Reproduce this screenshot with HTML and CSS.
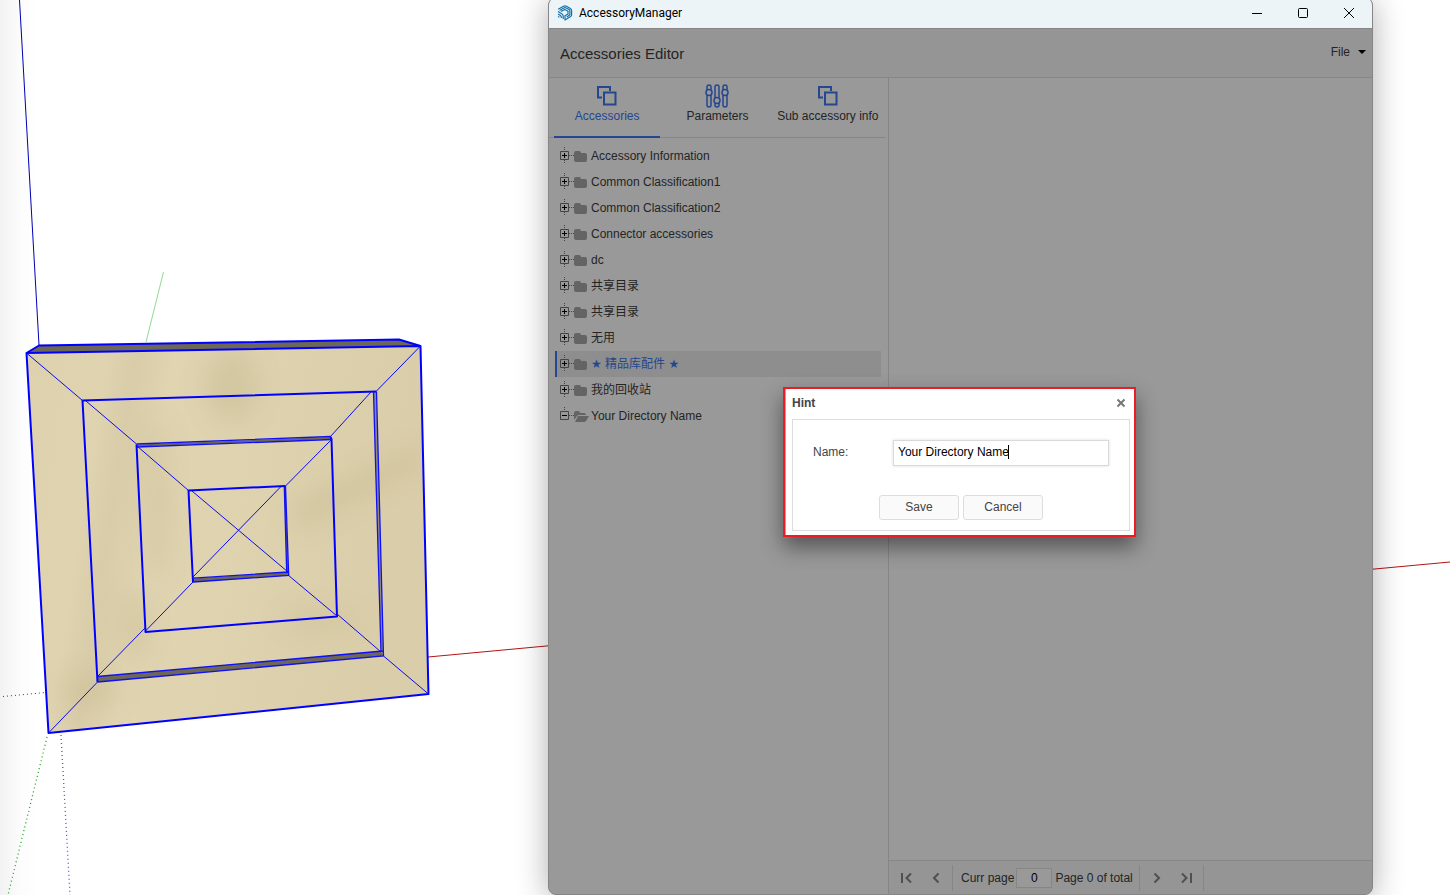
FILE: index.html
```html
<!DOCTYPE html>
<html lang="en">
<head>
<meta charset="utf-8">
<title>AccessoryManager</title>
<link rel="stylesheet" href="styles.css">
</head>
<body>
<svg class="scene" viewBox="0 0 1450 895" preserveAspectRatio="xMinYMin slice" aria-hidden="true">
  <defs>
    <linearGradient id="edge"><stop offset="0" stop-color="#f2f2f2"/><stop offset=".5" stop-color="#fcfcfc"/><stop offset="1" stop-color="#fff"/></linearGradient>
    <linearGradient id="wood" x1="0" x2="1" y1="0" y2=".15">
      <stop offset="0" stop-color="#ded2ae"/><stop offset=".2" stop-color="#dfd3b0"/><stop offset=".27" stop-color="#d9cca8"/>
      <stop offset=".36" stop-color="#e0d4b1"/><stop offset=".6" stop-color="#ded2af"/><stop offset="1" stop-color="#dacda9"/>
    </linearGradient>
    <filter id="soft" x="-50%" y="-50%" width="200%" height="200%"><feGaussianBlur stdDeviation="12"/></filter>
    <clipPath id="front"><path d="M26.5 353 420.5 346 428.5 694 48.5 733z"/></clipPath>
  </defs>
  <rect width="40" height="895" fill="url(#edge)"/>
  <g fill="none">
    <path d="M19.5 0 39 345" stroke="#0000b4"/>
    <path d="M163.500 272 146 342" stroke="#8edb8e"/>
    <path d="M428 657 1450 562" stroke="#b41414"/>
    <path d="M3 696.500 46 692.500" stroke="#a01414" stroke-dasharray="1 3"/>
    <path d="M47 737 8 895" stroke="#20a020" stroke-width="1.300" stroke-dasharray="1 3"/>
    <path d="M61 735 70 895" stroke="#5050d8" stroke-width="1.300" stroke-dasharray="1 3"/>
  </g>
  <path d="M26.5 353 420.5 346 428.5 694 48.500 733z" fill="url(#wood)"/>
  <g clip-path="url(#front)">
    <g filter="url(#soft)" fill="#c5b98f" opacity=".45">
      <ellipse cx="232" cy="385" rx="26" ry="36"/>
      <path d="M290 505 420 445 420 468 300 530z"/>
      <ellipse cx="157" cy="500" rx="9" ry="80"/>
      <ellipse cx="134" cy="625" rx="12" ry="36"/>
      <ellipse cx="320" cy="620" rx="40" ry="9"/>
      <ellipse cx="90" cy="690" rx="30" ry="14"/>
    </g>
  </g>
  <g fill="#6d6756">
    <path d="M26.500 353 39 345.500 399 339.500 420.500 346z"/>
    <path d="M97.500 676.500 381 651 383.500 656 97.500 682z"/>
    <path d="M373.500 392 376.500 391.500 383.500 656 381 652z" fill="#8e8a80"/>
    <path d="M136.500 444.500 330.500 437 331.500 439 137 446.500z"/>
    <path d="M193 578.500 288 572 288.500 575.500 193 582z"/>
    <path d="M284.500 487 285.500 486 288.500 575 286.500 572z"/>
  </g>
  <g fill="none" stroke="#0000ff" stroke-width="2" stroke-linejoin="round">
    <path d="M26.500 353 420.500 346 428.500 694 48.500 733zL39 345.500 399 339.500 420.500 346"/>
    <path d="M97.500 682 82.500 400.500 376.500 391.500"/>
    <path d="M136.500 444.500 145.500 632 337 616.500 331.500 439 330.500 437"/>
    <path d="M193 582 188.500 490.500 285.500 486"/>
  </g>
  <g fill="none" stroke="#1010f4" stroke-width="1.300">
    <path d="M376.500 391.500 383.500 656 97.500 682M373.500 392 381 652M97.500 676.500 383 651"/>
    <path d="M136.500 444 330.500 436.500M137 447 331.500 439.500"/>
    <path d="M285.500 486 288.700 575.500 193 582M193 578.200 288 572M284.300 487 286.700 572"/>
  </g>
  <g fill="none" stroke="#0a0af0">
    <path d="M26.500 353 82.500 400.500M86 401 136.500 444M137 446 188.500 490.500M192 491 288 572M288 575 337 616M337 614 381 652M383.500 656 428.500 694"/>
    <path d="M420.500 346 376.500 391M371 392 330 437M331 440 285.500 486M281 486.500 193 577M193 582 145.500 631M145 628 98 676M97.500 682 48.500 733"/>
  </g>
</svg>

<svg class="symbols" aria-hidden="true">
  <symbol id="i-squares" viewBox="0 0 22 22"><path d="M6 12.500H2V2h12v4M8 7.500h11.500v12H8z" fill="none" stroke="currentColor" stroke-width="2"/></symbol>
  <symbol id="i-sliders" viewBox="0 0 26 26"><g fill="none" stroke="currentColor" stroke-width="1.500"><path d="M3 7V4a2 2 0 0 1 4 0v3M3 12v10a2 2 0 0 0 4 0V12"/><circle cx="5" cy="9.500" r="3"/><path d="M11 15V4a2 2 0 0 1 4 0v11M11 20v2a2 2 0 0 0 4 0v-2"/><circle cx="13" cy="17.500" r="3"/><path d="M19 7V4a2 2 0 0 1 4 0v3M19 12v10a2 2 0 0 0 4 0V12"/><circle cx="21" cy="9.500" r="3"/></g></symbol>
  <symbol id="i-plus" viewBox="0 0 15 26"><path d="M5.500 4v4M5.500 17v4M10 12.500h5" stroke="#444" stroke-dasharray="1 1" fill="none"/><path d="M1.500 8.500h8v8h-8z" fill="none" stroke="#444"/><path d="M3 12.500h5M5.500 10v5" stroke="#000"/></symbol>
  <symbol id="i-minus" viewBox="0 0 15 26"><path d="M5.500 4v4M10 12.500h5" stroke="#444" stroke-dasharray="1 1" fill="none"/><path d="M1.500 8.500h8v8h-8z" fill="none" stroke="#444"/><path d="M3 12.500h5" stroke="#000"/></symbol>
  <symbol id="i-folder" viewBox="0 0 16 26"><path d="M0 10q0-2 2-2h3q2 0 2 2h4q2 0 2 2v5q0 2-2 2H2q-2 0-2-2z" fill="#646464"/></symbol>
  <symbol id="i-open" viewBox="0 0 16 26"><path d="M0 17v-7q0-2 2-2h2q2 0 2 2h4q2 0 2 2H5q-1 0-2 1z" fill="#646464"/><path d="M4 13h11l-3 5q-.6 1-2 1H1z" fill="#646464"/></symbol>
</svg>

<main class="window">
  <header class="titlebar">
    <svg class="logo" viewBox="0 0 16 16" aria-hidden="true"><g fill="none" stroke="#1272ab" stroke-width="1.200" stroke-linejoin="round"><path d="M1.200 4.200 6.500 1.200q1.500-.8 3 0L13.400 3.400q1.200.8 1.200 2.200v4.200q0 1.200-1 1.800L8 15v-4.200l3-1.800V6.200L7.800 4.400 4 6.600"/><path d="M2.600 5.400 6.800 3q1.200-.6 2.400 0l2.800 1.600q.9.500.9 1.600v3.600L9.800 12"/><path d="M1 6.600 5 8.900q1.200.8 1.200 2.200v3M1 9l2.400 1.400q.9.600.9 1.600v1M1 11.400l1.400.8"/></g></svg>
    <span class="app-name">AccessoryManager</span>
    <div class="window-buttons">
      <button type="button" aria-label="Minimize"><svg viewBox="0 0 12 12"><path d="M1 6.500h10" /></svg></button>
      <button type="button" aria-label="Maximize"><svg viewBox="0 0 12 12"><rect x="1.500" y="1.500" width="9" height="9" rx="1"/></svg></button>
      <button type="button" aria-label="Close window"><svg viewBox="0 0 12 12"><path d="M1 1l10 10M11 1 1 11"/></svg></button>
    </div>
  </header>
  <div class="app-header">
    <h1>Accessories Editor</h1>
    <button type="button" class="file-menu">File <svg viewBox="0 0 8 4" aria-hidden="true"><path d="M0 0h8L4 4z"/></svg></button>
  </div>
  <div class="content">
    <section class="sidebar">
      <nav class="tabs">
        <button type="button" class="tab active"><svg class="squares"><use href="#i-squares"/></svg>Accessories</button>
        <button type="button" class="tab"><svg><use href="#i-sliders"/></svg>Parameters</button>
        <button type="button" class="tab"><svg class="squares"><use href="#i-squares"/></svg>Sub accessory info</button>
      </nav>
      <ul class="tree">
        <li><svg class="toggle"><use href="#i-plus"/></svg><svg class="folder"><use href="#i-folder"/></svg>Accessory Information</li>
        <li><svg class="toggle"><use href="#i-plus"/></svg><svg class="folder"><use href="#i-folder"/></svg>Common Classification1</li>
        <li><svg class="toggle"><use href="#i-plus"/></svg><svg class="folder"><use href="#i-folder"/></svg>Common Classification2</li>
        <li><svg class="toggle"><use href="#i-plus"/></svg><svg class="folder"><use href="#i-folder"/></svg>Connector accessories</li>
        <li><svg class="toggle"><use href="#i-plus"/></svg><svg class="folder"><use href="#i-folder"/></svg>dc</li>
        <li lang="zh-CN"><svg class="toggle"><use href="#i-plus"/></svg><svg class="folder"><use href="#i-folder"/></svg>共享目录</li>
        <li lang="zh-CN"><svg class="toggle"><use href="#i-plus"/></svg><svg class="folder"><use href="#i-folder"/></svg>共享目录</li>
        <li lang="zh-CN"><svg class="toggle"><use href="#i-plus"/></svg><svg class="folder"><use href="#i-folder"/></svg>无用</li>
        <li lang="zh-CN" class="selected"><svg class="toggle"><use href="#i-plus"/></svg><svg class="folder"><use href="#i-folder"/></svg><span><span class="star">★</span> 精品库配件 <span class="star">★</span></span></li>
        <li lang="zh-CN"><svg class="toggle"><use href="#i-plus"/></svg><svg class="folder"><use href="#i-folder"/></svg>我的回收站</li>
        <li><svg class="toggle"><use href="#i-minus"/></svg><svg class="folder"><use href="#i-open"/></svg>Your Directory Name</li>
      </ul>
    </section>
    <section class="detail">
      <div class="pager">
        <div class="pager-group">
          <button type="button" aria-label="First page"><svg viewBox="0 0 12 12"><path d="M2 1v10M11 1.500 6.500 6l4.500 4.500"/></svg></button>
          <button type="button" aria-label="Previous page"><svg viewBox="0 0 12 12"><path d="M8.500 1.500 4 6l4.500 4.500"/></svg></button>
        </div>
        <div class="pager-group pager-text">
          <label for="page">Curr page</label>
          <input id="page" type="text" value="0">
          <span>Page 0 of total</span>
        </div>
        <div class="pager-group">
          <button type="button" aria-label="Next page"><svg viewBox="0 0 12 12"><path d="M3.500 1.500 8 6l-4.500 4.500"/></svg></button>
          <button type="button" aria-label="Last page"><svg viewBox="0 0 12 12"><path d="M10 1v10M1 1.500 5.500 6 1 10.500"/></svg></button>
        </div>
      </div>
    </section>
  </div>
</main>

<form class="dialog" role="dialog" aria-labelledby="hint-title">
  <div class="dialog-head">
    <h2 id="hint-title">Hint</h2>
    <button type="button" class="dialog-close" aria-label="Close"><svg viewBox="0 0 10 10"><path d="m1.500 1.500 7 7M8.500 1.500l-7 7"/></svg></button>
  </div>
  <div class="dialog-body">
    <div class="field">
      <label for="name">Name:</label>
      <div class="input-wrap">
        <input id="name" type="text" value="Your Directory Name">
        <span class="caret"></span>
      </div>
    </div>
    <div class="actions">
      <button type="button">Save</button>
      <button type="button">Cancel</button>
    </div>
  </div>
</form>
</body>
</html>
```

FILE: styles.css
```css
* {
  box-sizing: border-box;
}

body {
  position: relative;
  height: 100vh;
  margin: 0;
  overflow: hidden;
  background: #fff;
  color: #242424;
  font: 12px/16px "Liberation Sans", "Noto Sans CJK SC", sans-serif;
}

button,
input {
  margin: 0;
  padding: 0;
  border: 0;
  background: none;
  color: inherit;
  font: inherit;
}

h1,
h2,
ul {
  margin: 0;
  padding: 0;
  font-weight: normal;
}

svg {
  display: block;
}

.symbols {
  position: absolute;
  width: 0;
  height: 0;
}

.scene {
  width: 100%;
  height: 100%;
}

/* Application window floating over the drawing */
.window {
  position: absolute;
  top: -3px;
  right: 77px;
  bottom: 0;
  left: 548px;
  display: flex;
  flex-direction: column;
  overflow: hidden;
  border: 1px solid #868686;
  border-radius: 8px;
  background: #999;
  box-shadow: 0 4px 32px rgba(0, 0, 0, 0.32);
}

.titlebar {
  display: flex;
  flex: none;
  align-items: center;
  height: 31px;
  padding-left: 8px;
  border-bottom: 1px solid #868686;
  background: #ecf4f8;
  color: #000;
}

.logo {
  width: 16px;
  height: 16px;
}

.app-name {
  margin-left: 6px;
  font-family: Roboto, sans-serif;
}

.window-buttons {
  display: flex;
  margin-left: auto;
}

.window-buttons button {
  display: grid;
  width: 46px;
  height: 30px;
  place-items: center;
}

.window-buttons svg {
  width: 12px;
  height: 12px;
  fill: none;
  stroke: #000;
}

.app-header {
  display: flex;
  flex: none;
  align-items: center;
  justify-content: space-between;
  height: 49px;
  padding: 0 6px 0 11px;
  border-bottom: 1px solid #868686;
  background: #959595;
}

.app-header h1 {
  padding-top: 2px;
  font-size: 15px;
  line-height: 20px;
}

.file-menu {
  display: flex;
  align-items: center;
  gap: 8px;
  padding-bottom: 2px;
}

.file-menu svg {
  width: 8px;
  height: 4px;
}

.content {
  display: flex;
  flex: 1;
  min-height: 0;
}

.sidebar {
  flex: none;
  width: 340px;
  border-right: 1px solid #868686;
}

.tabs {
  display: grid;
  grid-template-columns: repeat(3, 1fr);
  gap: 4px;
  margin-right: 2px;
  padding: 0 5px;
  border-bottom: 1px solid #868686;
}

.tab {
  display: flex;
  flex-direction: column;
  align-items: center;
  height: 60px;
  margin-bottom: -1px;
  padding-top: 5px;
  white-space: nowrap;
}

.tab svg {
  width: 26px;
  height: 26px;
  margin-bottom: -1px;
  color: #24478f;
}

.tab .squares {
  padding: 2px;
}

.tab.active {
  border-bottom: 2px solid #24478f;
  color: #24478f;
}

.tree {
  padding: 5px 7px 0 6px;
  list-style: none;
}

.tree li {
  display: flex;
  align-items: center;
  height: 26px;
  border-left: 2px solid transparent;
  padding-left: 2px;
}

.tree .selected {
  border-left-color: #24478f;
  background: #8e8e8e;
  color: #24478f;
}

.star {
  font-family: "DejaVu Sans", sans-serif;
}

.toggle {
  width: 15px;
  height: 26px;
}

.folder {
  width: 16px;
  height: 26px;
  margin-right: 1px;
}

.detail {
  display: flex;
  flex: 1;
  flex-direction: column;
  justify-content: flex-end;
}

.pager {
  display: flex;
  align-items: center;
  height: 34px;
  border-top: 1px solid #868686;
  background: #959595;
}

.pager-group {
  display: flex;
  align-items: center;
  height: 26px;
  padding: 0 1px 0 2px;
  border-right: 1px solid #868686;
}

.pager-group button {
  display: grid;
  width: 30px;
  height: 26px;
  place-items: center;
}

.pager-group svg {
  width: 12px;
  height: 12px;
  fill: none;
  stroke: #505050;
  stroke-width: 2;
}

.pager-text {
  padding: 0 6px 0 8px;
}

.pager-text input {
  width: 36px;
  height: 20px;
  margin: 0 3px 0 2px;
  border: 1px solid #868686;
  background: #999;
  color: #000;
  text-align: center;
}

/* Name prompt */
.dialog {
  position: absolute;
  top: 387px;
  left: 783px;
  width: 353px;
  padding: 0 4px 4px 7px;
  border: 2px solid #ed1c24;
  background: #fff;
  box-shadow: inset 1px 0 #aaa, 0 10px 20px rgba(0, 0, 0, 0.45);
  color: #444;
}

.dialog-head {
  display: flex;
  align-items: center;
  justify-content: space-between;
  height: 30px;
  padding: 0 4px 2px 0;
}

.dialog-head h2 {
  font-size: 12px;
  font-weight: bold;
}

.dialog-close svg {
  width: 10px;
  height: 10px;
  fill: none;
  stroke: #777;
  stroke-width: 2;
}

.dialog-body {
  padding: 20px 20px 10px;
  border: 1px solid #ddd;
}

.field {
  display: flex;
  align-items: center;
}

.field label {
  width: 80px;
  padding-bottom: 2px;
}

.input-wrap {
  position: relative;
  flex: 1;
}

.input-wrap input {
  display: block;
  width: 100%;
  height: 26px;
  padding: 0 4px 2px;
  border: 1px solid #d9d9d9;
  box-shadow: 0 0 3px #ddd;
  color: #000;
}

.caret {
  position: absolute;
  top: 5px;
  left: 115px;
  width: 1px;
  height: 14px;
  background: #000;
}

.actions {
  display: flex;
  justify-content: center;
  gap: 4px;
  margin-top: 29px;
}

.actions button {
  width: 80px;
  height: 25px;
  padding-bottom: 2px;
  border: 1px solid #ddd;
  border-radius: 3px;
  background: #fafafa;
}
```
